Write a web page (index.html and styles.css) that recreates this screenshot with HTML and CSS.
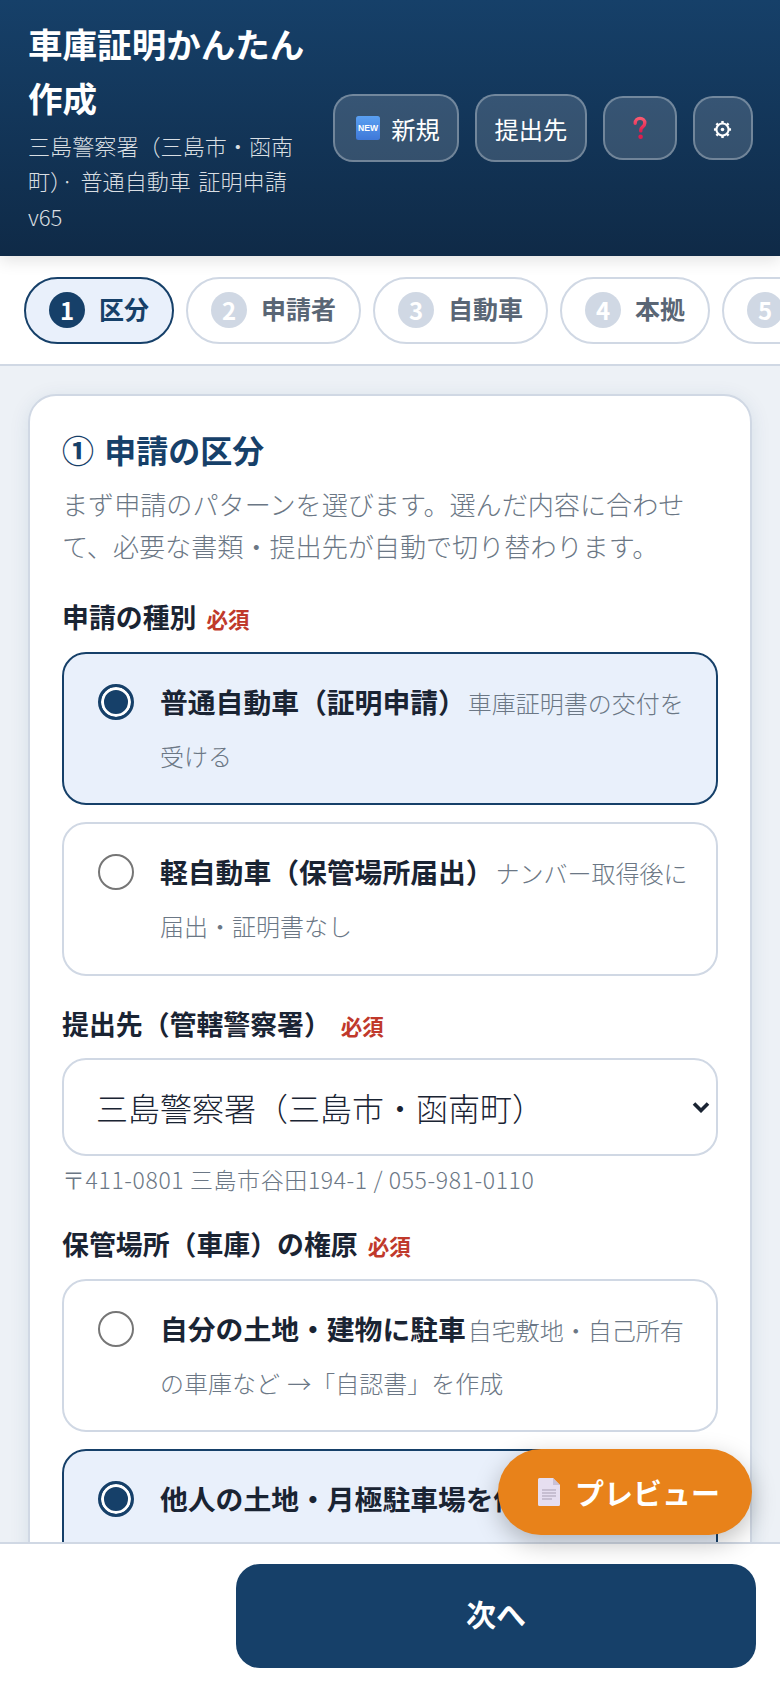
FILE: index.html
```html
<!DOCTYPE html>
<html lang="ja">
<head>
<meta charset="utf-8">
<title>車庫証明かんたん作成</title>
<link rel="stylesheet" href="styles.css">
</head>
<body>
<div class="app">
  <header class="header">
    <div class="brand">
      <h1>車庫証明かんたん作成</h1>
      <p>三島警察署（三島市・函南町）· 普通自動車 証明申請 v65</p>
    </div>
    <div class="actions">
      <button class="hbtn hbtn-new">
        <svg class="ico-new" viewBox="0 0 24 24" aria-hidden="true"><defs><linearGradient id="ng" x1="0" y1="0" x2="0" y2="1"><stop offset="0" stop-color="#5aa0f2"/><stop offset="1" stop-color="#3f78d8"/></linearGradient></defs><rect width="24" height="24" rx="2.5" fill="url(#ng)"/><text x="12" y="15.4" text-anchor="middle" class="ico-new-t" textLength="20" lengthAdjust="spacingAndGlyphs">NEW</text></svg>
        新規</button>
      <button class="hbtn">提出先</button>
      <button class="hbtn hbtn-sq q">
        <svg class="ico-q" viewBox="0 0 14 24" aria-hidden="true"><defs><linearGradient id="qg" x1="0" y1="0" x2="0" y2="1"><stop offset="0" stop-color="#f8586f"/><stop offset="1" stop-color="#e01e4e"/></linearGradient></defs><path d="M2.2 7.2C2.2 4.2 4.3 2.4 7 2.4c2.8 0 4.8 1.8 4.8 4.5 0 2-1 3.1-2.4 4.2-1.2.9-1.6 1.6-1.6 3v.8" fill="none" stroke="url(#qg)" stroke-width="3.4" stroke-linecap="round"/><circle cx="7.6" cy="20.8" r="2.3" fill="#e01e4e"/></svg>
      </button>
      <button class="hbtn hbtn-sq g">
        <svg class="ico-g" viewBox="0 0 20 20" aria-hidden="true"><circle cx="10" cy="10" r="6.4" fill="none" stroke="#fff" stroke-width="2.2"/><circle cx="10" cy="10" r="1.9" fill="#fff"/><g stroke="#fff" stroke-width="2.6"><path d="M10 1v2.4"/><path d="M10 16.6V19"/><path d="M1 10h2.4"/><path d="M16.6 10H19"/><path d="M3.6 3.6l1.7 1.7"/><path d="M14.7 14.7l1.7 1.7"/><path d="M3.6 16.4l1.7-1.7"/><path d="M14.7 5.3l1.7-1.7"/></g></svg>
      </button>
    </div>
  </header>
  <nav class="tabs">
    <div class="tab active"><span class="num">1</span>区分</div>
    <div class="tab"><span class="num">2</span>申請者</div>
    <div class="tab"><span class="num">3</span>自動車</div>
    <div class="tab"><span class="num">4</span>本拠</div>
    <div class="tab"><span class="num">5</span>保管場所</div>
  </nav>
  <main class="main">
    <section class="card">
      <h2>① 申請の区分</h2>
      <p class="lead">まず申請のパターンを選びます。選んだ内容に合わせて、必要な書類・提出先が自動で切り替わります。</p>
      <div class="label">申請の種別<span class="req">必須</span></div>
      <label class="opt on"><input type="radio" name="a" checked><span class="txt"><b>普通自動車（証明申請）</b><small>車庫証明書の交付を受ける</small></span></label>
      <label class="opt"><input type="radio" name="a"><span class="txt"><b>軽自動車（保管場所届出）</b><small>ナンバー取得後に届出・証明書なし</small></span></label>
      <div class="label l2">提出先（管轄警察署）<span class="req">必須</span></div>
      <div class="selwrap">
        <select class="sel"><option>三島警察署（三島市・函南町）</option></select>
        <svg class="chev" viewBox="0 0 18 12" aria-hidden="true"><path d="M2 2.5l7 7 7-7" fill="none" stroke="#1a2433" stroke-width="3.6"/></svg>
      </div>
      <p class="hint">〒411-0801 三島市谷田194-1 / 055-981-0110</p>
      <div class="label l3">保管場所（車庫）の権原<span class="req">必須</span></div>
      <label class="opt"><input type="radio" name="b"><span class="txt"><b>自分の土地・建物に駐車</b><small>自宅敷地・自己所有の車庫など →「自認書」を作成</small></span></label>
      <label class="opt on"><input type="radio" name="b" checked><span class="txt"><b>他人の土地・月極駐車場を借りる</b><small>使用承諾書を作成</small></span></label>
    </section>
  </main>
  <footer class="bar"><button class="next">次へ</button></footer>
  <button class="fab">
    <svg class="ico-doc" viewBox="0 0 22 28" aria-hidden="true"><path d="M1.5 0H15l7 7v19.5a1.5 1.5 0 0 1-1.5 1.5h-19A1.5 1.5 0 0 1 0 26.5V1.5A1.5 1.5 0 0 1 1.5 0z" fill="#e6def0"/><path d="M15 0l7 7h-7z" fill="#c9c0d6"/><path d="M4 12h14M4 15h14M4 18h14M4 21h10" stroke="#a89fb3" stroke-width="1"/></svg>
    プレビュー</button>
</div>
</body>
</html>
```
FILE: styles.css
```css
* { box-sizing: border-box; }
html, body { margin: 0; height: 100%; }
body { font-family: "Noto Sans CJK JP", "Noto Sans", sans-serif; color: #1a2433; background: #edf1f6; overflow: hidden; }
.app { position: relative; height: 1688px; display: flex; flex-direction: column; overflow: hidden; }
.header { height: 256px; flex: none; display: flex; align-items: flex-start; gap: 16px; padding: 16px 28px 0; background: linear-gradient(180deg, #164069, #0f2a47); color: #fff; box-shadow: 0 4px 16px rgba(0,0,0,.12); position: relative; z-index: 2; }
.brand { width: 289px; flex: none; }
.brand h1 { margin: 0; font-size: 34.56px; line-height: 54px; font-weight: 700; }
.brand p { margin: 3.5px 0 0; font-size: 22.1px; line-height: 35.5px; font-weight: 300; word-spacing: 2.5px; color: rgba(255,255,255,.85); }
.actions { display: flex; align-items: center; gap: 16px; height: 240px; margin-top: -16px; padding-top: 16px; }
.hbtn { flex: none; display: flex; align-items: center; justify-content: center; height: 68px; padding: 0 17.5px; border: 2px solid rgba(255,255,255,.3); border-radius: 20px; background: rgba(255,255,255,.15); color: #fff; font: 400 24.3px "Noto Sans CJK JP", sans-serif; white-space: nowrap; }
.hbtn-new { width: 126px; padding: 0 0 0 4px; }
.hbtn-sq { height: 64px; padding: 0; }
.q { width: 74px; }
.g { width: 60px; }
.ico-new { width: 24px; height: 24px; margin-right: 11px; flex: none; }
.ico-new-t { font: 700 9.4px "Liberation Sans", sans-serif; fill: #fff; }
.ico-q { width: 14px; height: 24px; }
.ico-g { width: 19px; height: 19px; margin-top: 3px; }
.tabs { height: 110px; flex: none; display: flex; align-items: center; gap: 12px; padding: 0 24px; background: #fff; border-bottom: 2px solid #d0d8e4; overflow: hidden; }
.tab { flex: none; height: 67px; display: flex; align-items: center; gap: 14px; padding: 0 23px 4px; border: 2px solid #d0d8e4; border-radius: 34px; font-size: 25px; font-weight: 700; color: #5a6675; background: #fff; }
.tab .num { width: 36px; height: 36px; margin-top: 4px; padding-bottom: 2px; border-radius: 50%; background: #d0d8e4; color: #fff; font-size: 24px; display: flex; align-items: center; justify-content: center; }
.tab.active { border-color: #164069; background: #e9f0fb; color: #164069; }
.tab.active .num { background: #164069; }
.main { flex: 1; min-height: 0; overflow: hidden; padding: 28px 28px 0; }
.card { background: #fff; border: 2px solid #d0d8e4; border-radius: 28px; padding: 30px 32px 32px; box-shadow: 0 4px 20px rgba(22,64,105,.1); }
.card h2 { margin: 0; font-size: 32px; line-height: 46px; font-weight: 700; word-spacing: 3px; color: #164069; }
.lead { margin: 10.5px 0 0; font-size: 26.1px; line-height: 42px; font-weight: 300; color: #6b7785; }
.label { margin-top: 29px; margin-bottom: 12px; font-size: 26.88px; line-height: 42px; font-weight: 700; }
.l2 { margin-top: 27px; margin-bottom: 11px; }
.l3 { margin-top: 26px; }
.req { margin-left: 10px; font-size: 21.5px; color: #c0392b; }
.opt { display: flex; align-items: flex-start; padding: 22px 26px 22px 30px; height: 153.5px; border: 2px solid #d0d8e4; border-radius: 24px; background: #fff; margin-bottom: 17px; }
.opt.on { border-color: #164069; background: #e9f0fb; }
.opt input { appearance: none; width: 36px; height: 36px; margin: 8px 26px 0 4px; flex: none; border: 2.5px solid #767676; border-radius: 50%; background: #fff; }
.opt input:checked { border: 3px solid #164069; background: #164069; box-shadow: inset 0 0 0 3px #fff; }
.txt { line-height: 50px; }
.txt b { font-size: 27.8px; font-weight: 700; }
.txt small { margin-left: 2px; font-size: 24px; font-weight: 300; word-spacing: 2px; color: #6b7785; }
.selwrap { position: relative; }
.sel { appearance: none; display: block; width: 100%; height: 98px; padding: 0 32px; border: 2px solid #d0d8e4; border-radius: 24px; background: #fff; color: #1a2433; font: 300 32px "Noto Sans CJK JP", sans-serif; }
.chev { position: absolute; right: 8px; top: 43px; width: 18px; height: 12px; pointer-events: none; }
.hint { margin: 5px 0 0; font-size: 23px; line-height: 36px; font-weight: 300; letter-spacing: .6px; color: #6b7785; }
.bar { height: 146px; flex: none; display: flex; justify-content: flex-end; padding: 20px 24px; background: #fff; border-top: 2px solid #d0d8e4; position: relative; z-index: 2; }
.next { width: 520px; height: 104px; padding: 0 0 6px; border: 0; border-radius: 24px; background: #164069; color: #fff; font: 700 30px "Noto Sans CJK JP", sans-serif; }
.fab { position: absolute; left: 498px; top: 1449px; z-index: 3; width: 254px; height: 86px; display: flex; align-items: center; justify-content: center; gap: 15px; padding: 0 0 0 8px; border: 0; border-radius: 43px; background: #e8821a; color: #fff; font: 700 29px "Noto Sans CJK JP", sans-serif; box-shadow: 0 8px 24px rgba(0,0,0,.25); white-space: nowrap; }
.ico-doc { width: 22px; height: 28px; flex: none; }
```
